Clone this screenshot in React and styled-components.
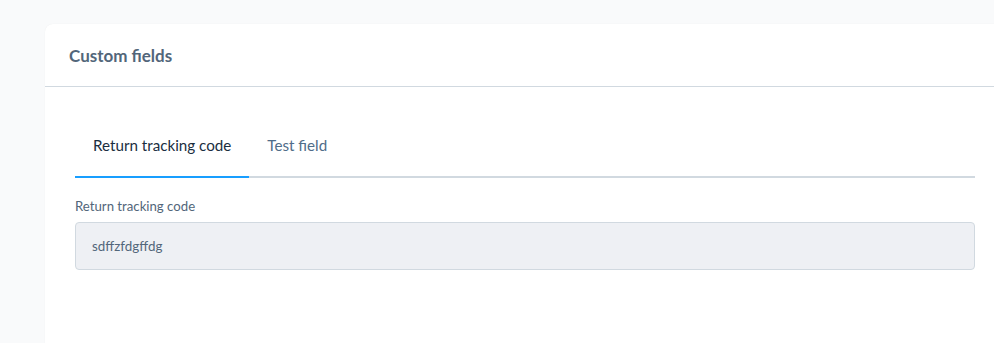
import React, { useState } from "react"
import styled, { createGlobalStyle } from "styled-components"

const GlobalStyle = createGlobalStyle`
  html, body {
    margin: 0;
    padding: 0;
    background: #f9fafb;
    font-family: "Lato", "Noto Sans", sans-serif;
    overflow: hidden;
  }
`

const Page = styled.div`
  width: 994px;
  height: 343px;
  padding: 24px 0 0 45px;
  box-sizing: border-box;
  overflow: hidden;
`

const Card = styled.div`
  width: 1000px;
  height: 400px;
  background: #fff;
  border-radius: 8px 0 0 0;
  box-shadow: 0 0 1px rgba(0, 0, 0, 0.08);
`

const CardHeader = styled.div`
  height: 62px;
  display: flex;
  align-items: center;
  padding: 0 24px;
  border-bottom: 1px solid #d1d9e0;
`

const Title = styled.h3`
  margin: 0;
  font-size: 17px;
  font-weight: 700;
  color: #52667a;
`

const CardBody = styled.div`
  width: 900px;
  padding: 30px;
`

const Tabs = styled.div`
  display: flex;
  border-bottom: 2px solid #d1d9e0;
`

const Tab = styled.button`
  height: 61px;
  padding: 0 18px 4px;
  margin-bottom: -2px;
  border: none;
  border-bottom: 2px solid ${(p) => (p.$active ? "#189eff" : "transparent")};
  background: none;
  font-family: inherit;
  font-size: 15.2px;
  color: ${(p) => (p.$active ? "#1a2e3f" : "#4f6c89")};
  cursor: pointer;
`

const Field = styled.div`
  display: flex;
  flex-direction: column;
  margin-top: 18px;
`

const Label = styled.label`
  font-size: 13.2px;
  line-height: 20px;
  color: #52667a;
  margin-bottom: 6px;
`

const TextInput = styled.input`
  height: 48px;
  box-sizing: border-box;
  padding: 0 16px;
  border: 1px solid #d1d9e0;
  border-radius: 4px;
  background: #eef0f4;
  font-family: inherit;
  font-size: 13.4px;
  color: #52667a;
  outline: none;
`

const tabs = ["Return tracking code", "Test field"]

const App = () => {
  const [active, setActive] = useState(0)

  return (
    <Page>
      <GlobalStyle />
      <Card>
        <CardHeader>
          <Title>Custom fields</Title>
        </CardHeader>
        <CardBody>
          <Tabs>
            {tabs.map((t, i) => (
              <Tab key={t} $active={i === active} onClick={() => setActive(i)}>
                {t}
              </Tab>
            ))}
          </Tabs>
          <Field>
            <Label>Return tracking code</Label>
            <TextInput readOnly value="sdffzfdgffdg" />
          </Field>
        </CardBody>
      </Card>
    </Page>
  )
}

export default App
